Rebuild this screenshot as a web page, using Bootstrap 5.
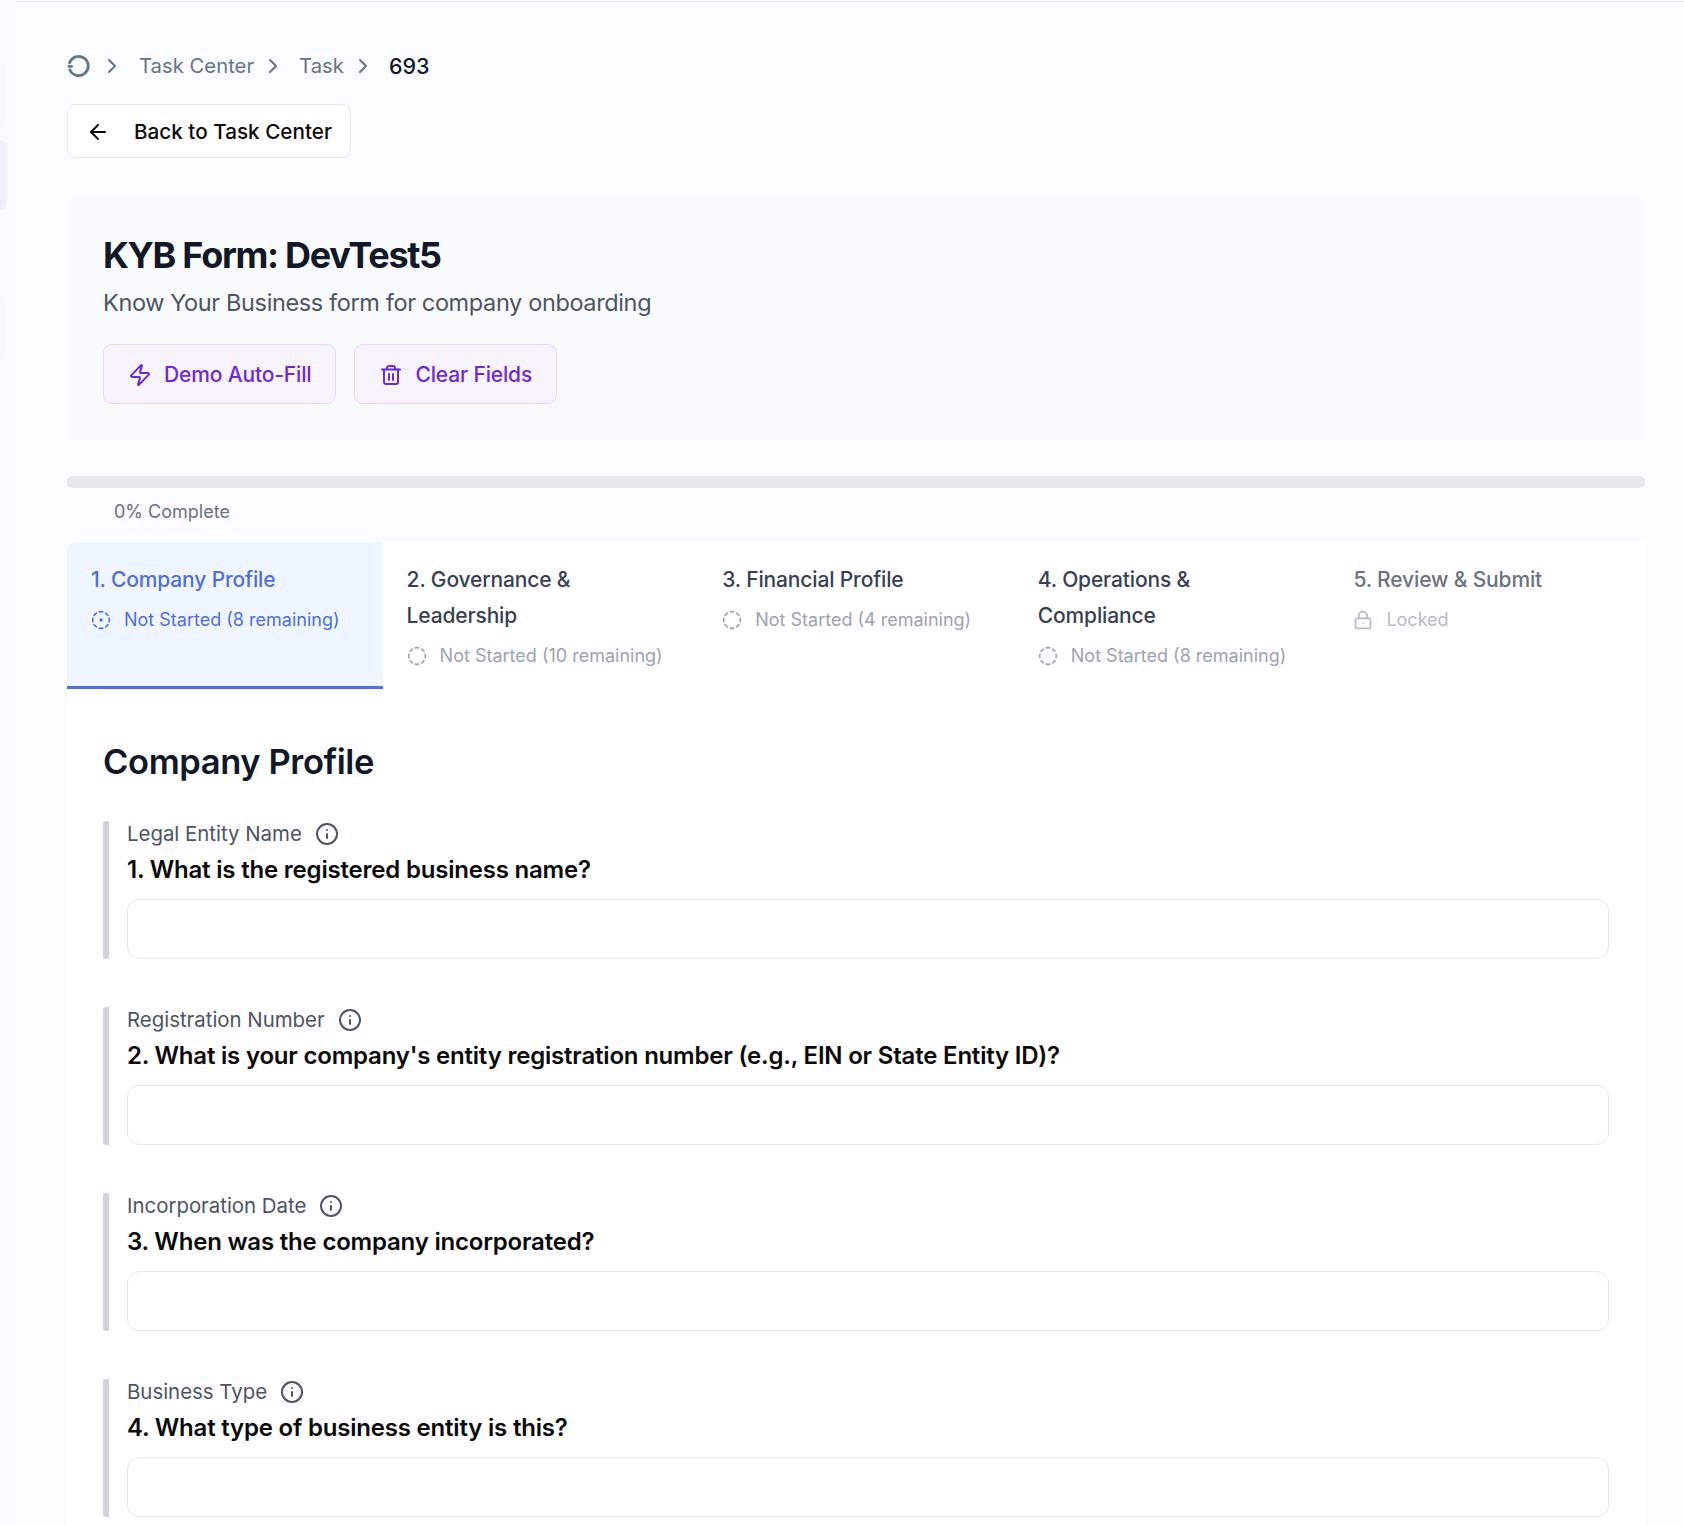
<!DOCTYPE html>
<html lang="en">
<head>
    <meta charset="UTF-8">
    <meta name="viewport" content="width=device-width, initial-scale=1.0">
    <title>KYB Form: DevTest5</title>
    <link href="https://cdn.jsdelivr.net/npm/bootstrap@5.3.0/dist/css/bootstrap.min.css" rel="stylesheet">
    <style>
        body {
            font-family: Inter, "Liberation Sans", sans-serif;
            background: #fbfcff;
            min-height: 100vh;
        }
        svg { flex: none; fill: none; stroke: currentColor; stroke-width: 2; stroke-linecap: round; stroke-linejoin: round; }

        .side-strip { width: 16px; flex: none; background: #fafbfe; padding-top: 62px; }
        .side-pill { width: 6px; height: 66px; margin-bottom: 12px; border-radius: 0 6px 6px 0; background: #f8f9fe; }
        .side-pill.current { height: 70px; background: #eef1fd; margin-bottom: 85px; }

        .page-main { border-top: 1px solid #e5e7eb; margin-top: 1px; padding: 0 39px 0 51px; }

        .crumbs { height: 50px; margin: 39px 0 13px; font-size: 20.3px; color: #64748b; }
        .crumbs .here { color: #0f172a; font-weight: 500; font-size: 21.5px; }
        .crumb-home { stroke-width: 2.8; margin-right: 9px; }
        .crumb-sep { margin: 0 14px 0 7px; }
        .crumb-sep.first { margin-left: 0; margin-right: 15px; }

        .back-btn {
            height: 54px; width: 284px; padding: 1px 0 0 18px; gap: 24px;
            background: #fff; border: 1px solid #e5e7eb; border-radius: 9px;
            font-size: 20.7px; font-weight: 500; color: #0a0a0a;
        }

        .head-panel { margin-top: 37px; height: 245px; padding: 35px 36px; background: #f9fafc; border-radius: 9px; }
        .head-title { font-size: 36px; font-weight: 700; line-height: 50px; color: #111827; letter-spacing: -1.3px; margin: 0; }
        .head-sub { font-size: 23.5px; line-height: 36px; color: #4b5563; letter-spacing: -0.37px; margin: 5px 0 0; }
        .head-actions { gap: 18px; margin-top: 23px; }
        .demo-btn {
            height: 60px; padding: 1px 24px 0; gap: 12px;
            background: #f8f4ff; border: 1px solid #e9d5ff; border-radius: 9px;
            font-size: 21px; font-weight: 500; letter-spacing: -0.15px; color: #6d28d9;
        }

        .bar-track { margin-top: 36px; height: 12px; border-radius: 6px; background: #e5e7eb; }
        .bar-label { padding-left: 47px; margin-top: 10px; height: 44px; font-size: 18px; line-height: 28px; color: #6b7280; }

        .step-tab { height: 147px; padding: 20px 24px 0; background: #fff; border-bottom: 3px solid transparent; }
        .step-tab.current { background: #eff6ff; border-bottom-color: #4f6ee0; border-radius: 9px 0 0 0; }
        .step-name { font-size: 21px; font-weight: 500; line-height: 36px; letter-spacing: -0.15px; color: #374151; }
        .step-state { margin-top: 8px; gap: 13px; font-size: 18px; line-height: 27px; color: #9ca3af; }
        .step-tab.current .step-name, .step-tab.current .step-state { color: #4f6ee0; }
        .step-tab.locked .step-name { color: #6b7280; }
        .step-tab.locked .step-state { color: #b6bbc4; }

        .form-panel { background: #fff; padding: 44px 36px 10px; flex-grow: 1; }
        .form-title { font-size: 34.5px; font-weight: 600; line-height: 58px; color: #111827; letter-spacing: -0.4px; margin: 0 0 30px; }

        .q-block { border-left: 6px solid #d1d5db; border-radius: 3px; padding-left: 18px; margin-bottom: 48px; }
        .q-topic { gap: 13px; font-size: 20.4px; line-height: 26px; color: #4b5563; }
        .q-text { font-size: 24px; font-weight: 600; line-height: 36px; color: #0a0a0a; margin: 5px 0 11px; letter-spacing: -0.2px; }
        .q-input.form-control { height: 60px; border: 1px solid #e5e7eb; border-radius: 12px; }
    </style>
</head>
<body class="d-flex">
    <!-- collapsed sidebar edge -->
    <div class="side-strip">
        <div class="side-pill"></div>
        <div class="side-pill current"></div>
        <div class="side-pill"></div>
    </div>

    <div class="page-main flex-grow-1 d-flex flex-column">
        <nav class="crumbs d-flex align-items-center">
            <svg class="crumb-home" width="24" height="24" viewBox="0 0 24 24"><path d="M2.6 8.8A9.6 9.6 0 1 1 2.9 16"/><path d="M2.2 12.4h2.4"/></svg>
            <svg class="crumb-sep first" width="24" height="24" viewBox="0 0 24 24"><path d="m9 18 6-6-6-6"/></svg>
            <span>Task Center</span>
            <svg class="crumb-sep" width="24" height="24" viewBox="0 0 24 24"><path d="m9 18 6-6-6-6"/></svg>
            <span>Task</span>
            <svg class="crumb-sep" width="24" height="24" viewBox="0 0 24 24"><path d="m9 18 6-6-6-6"/></svg>
            <span class="here">693</span>
        </nav>

        <button type="button" class="btn back-btn d-flex align-items-center">
            <svg width="24" height="24" viewBox="0 0 24 24"><path d="m12 19-7-7 7-7"/><path d="M19 12H5"/></svg>
            Back to Task Center
        </button>

        <div class="head-panel">
            <h1 class="head-title">KYB Form: DevTest5</h1>
            <p class="head-sub">Know Your Business form for company onboarding</p>
            <div class="head-actions d-flex">
                <button type="button" class="btn demo-btn d-flex align-items-center">
                    <svg width="24" height="24" viewBox="0 0 24 24"><path d="M4 14a1 1 0 0 1-.78-1.63l9.9-10.2a.5.5 0 0 1 .86.46l-1.92 6.02A1 1 0 0 0 13 10h7a1 1 0 0 1 .78 1.63l-9.9 10.2a.5.5 0 0 1-.86-.46l1.92-6.02A1 1 0 0 0 11 14z"/></svg>
                    Demo Auto-Fill
                </button>
                <button type="button" class="btn demo-btn d-flex align-items-center">
                    <svg width="24" height="24" viewBox="0 0 24 24"><path d="M3 6.5h18"/><path d="M19 6.5V19c0 1.2-1 2-2 2H7c-1 0-2-.8-2-2V6.5"/><path d="M8 6.5V5c0-1.3.7-2 2-2h4c1.3 0 2 .7 2 2v1.5"/><path d="M10 11v6"/><path d="M14 11v6"/></svg>
                    Clear Fields
                </button>
            </div>
        </div>

        <div class="bar-track"></div>
        <div class="bar-label">0% Complete</div>

        <div class="row g-0">
            <div class="col step-tab current">
                <div class="step-name">1. Company Profile</div>
                <div class="step-state d-flex align-items-center">
                    <svg width="20" height="20" viewBox="0 0 24 24"><path d="M10.1 2.182a10 10 0 0 1 3.8 0"/><path d="M13.9 21.818a10 10 0 0 1-3.8 0"/><path d="M17.609 3.721a10 10 0 0 1 2.69 2.7"/><path d="M2.182 13.9a10 10 0 0 1 0-3.8"/><path d="M20.279 17.609a10 10 0 0 1-2.7 2.69"/><path d="M21.818 10.1a10 10 0 0 1 0 3.8"/><path d="M3.721 6.391a10 10 0 0 1 2.7-2.69"/><path d="M6.391 20.279a10 10 0 0 1-2.69-2.7"/><circle cx="12" cy="12" r="1"/></svg>
                    Not Started (8 remaining)
                </div>
            </div>
            <div class="col step-tab">
                <div class="step-name">2. Governance &amp; Leadership</div>
                <div class="step-state d-flex align-items-center">
                    <svg width="20" height="20" viewBox="0 0 24 24"><path d="M10.1 2.182a10 10 0 0 1 3.8 0"/><path d="M13.9 21.818a10 10 0 0 1-3.8 0"/><path d="M17.609 3.721a10 10 0 0 1 2.69 2.7"/><path d="M2.182 13.9a10 10 0 0 1 0-3.8"/><path d="M20.279 17.609a10 10 0 0 1-2.7 2.69"/><path d="M21.818 10.1a10 10 0 0 1 0 3.8"/><path d="M3.721 6.391a10 10 0 0 1 2.7-2.69"/><path d="M6.391 20.279a10 10 0 0 1-2.69-2.7"/></svg>
                    Not Started (10 remaining)
                </div>
            </div>
            <div class="col step-tab">
                <div class="step-name">3. Financial Profile</div>
                <div class="step-state d-flex align-items-center">
                    <svg width="20" height="20" viewBox="0 0 24 24"><path d="M10.1 2.182a10 10 0 0 1 3.8 0"/><path d="M13.9 21.818a10 10 0 0 1-3.8 0"/><path d="M17.609 3.721a10 10 0 0 1 2.69 2.7"/><path d="M2.182 13.9a10 10 0 0 1 0-3.8"/><path d="M20.279 17.609a10 10 0 0 1-2.7 2.69"/><path d="M21.818 10.1a10 10 0 0 1 0 3.8"/><path d="M3.721 6.391a10 10 0 0 1 2.7-2.69"/><path d="M6.391 20.279a10 10 0 0 1-2.69-2.7"/></svg>
                    Not Started (4 remaining)
                </div>
            </div>
            <div class="col step-tab">
                <div class="step-name">4. Operations &amp; Compliance</div>
                <div class="step-state d-flex align-items-center">
                    <svg width="20" height="20" viewBox="0 0 24 24"><path d="M10.1 2.182a10 10 0 0 1 3.8 0"/><path d="M13.9 21.818a10 10 0 0 1-3.8 0"/><path d="M17.609 3.721a10 10 0 0 1 2.69 2.7"/><path d="M2.182 13.9a10 10 0 0 1 0-3.8"/><path d="M20.279 17.609a10 10 0 0 1-2.7 2.69"/><path d="M21.818 10.1a10 10 0 0 1 0 3.8"/><path d="M3.721 6.391a10 10 0 0 1 2.7-2.69"/><path d="M6.391 20.279a10 10 0 0 1-2.69-2.7"/></svg>
                    Not Started (8 remaining)
                </div>
            </div>
            <div class="col step-tab locked">
                <div class="step-name">5. Review &amp; Submit</div>
                <div class="step-state d-flex align-items-center">
                    <svg width="20" height="20" viewBox="0 0 24 24"><rect x="3" y="10" width="18" height="12" rx="2"/><path d="M7 10V7a5 5 0 0 1 10 0v3"/><path d="M12 16h.01"/></svg>
                    Locked
                </div>
            </div>
        </div>

        <div class="form-panel">
            <h2 class="form-title">Company Profile</h2>

            <div class="q-block">
                <div class="q-topic d-flex align-items-center">Legal Entity Name
                    <svg width="24" height="24" viewBox="0 0 24 24" stroke-width="1.8"><circle cx="12" cy="12" r="10"/><path d="M12 16v-4"/><path d="M12 8h.01"/></svg>
                </div>
                <div class="q-text">1. What is the registered business name?</div>
                <input type="text" class="form-control q-input">
            </div>

            <div class="q-block">
                <div class="q-topic d-flex align-items-center">Registration Number
                    <svg width="24" height="24" viewBox="0 0 24 24" stroke-width="1.8"><circle cx="12" cy="12" r="10"/><path d="M12 16v-4"/><path d="M12 8h.01"/></svg>
                </div>
                <div class="q-text">2. What is your company's entity registration number (e.g., EIN or State Entity ID)?</div>
                <input type="text" class="form-control q-input">
            </div>

            <div class="q-block">
                <div class="q-topic d-flex align-items-center">Incorporation Date
                    <svg width="24" height="24" viewBox="0 0 24 24" stroke-width="1.8"><circle cx="12" cy="12" r="10"/><path d="M12 16v-4"/><path d="M12 8h.01"/></svg>
                </div>
                <div class="q-text">3. When was the company incorporated?</div>
                <input type="text" class="form-control q-input">
            </div>

            <div class="q-block mb-0">
                <div class="q-topic d-flex align-items-center">Business Type
                    <svg width="24" height="24" viewBox="0 0 24 24" stroke-width="1.8"><circle cx="12" cy="12" r="10"/><path d="M12 16v-4"/><path d="M12 8h.01"/></svg>
                </div>
                <div class="q-text">4. What type of business entity is this?</div>
                <input type="text" class="form-control q-input">
            </div>
        </div>
    </div>

    <script src="https://cdn.jsdelivr.net/npm/bootstrap@5.3.0/dist/js/bootstrap.bundle.min.js"></script>
</body>
</html>
